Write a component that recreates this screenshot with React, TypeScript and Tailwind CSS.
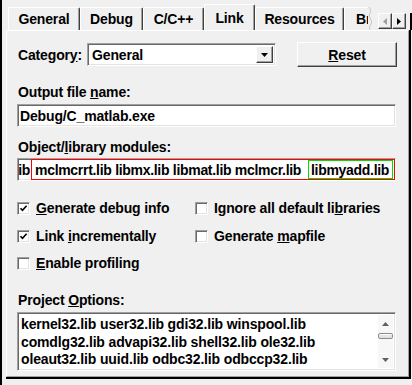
import React from 'react';

const raised =
  'border border-t-white border-l-white border-r-[#404040] border-b-[#404040] shadow-[inset_-1px_-1px_0_#a0a0a0]';
const sunken =
  'border border-t-[#a0a0a0] border-l-[#a0a0a0] border-r-white border-b-white shadow-[inset_1px_1px_0_#696969,inset_-1px_-1px_0_#e3e3e3] bg-white';

const Tab = ({ label, className }: { label: string; className: string }) => (
  <div
    className={`h-[23px] shrink-0 border-t border-l border-t-white border-l-white border-r border-r-[#404040] shadow-[inset_-1px_0_0_#a0a0a0] rounded-t-[2px] flex justify-center pt-[3px] leading-[16px] ${className}`}
  >
    {label}
  </div>
);

const CheckMark = () => (
  <svg width="9" height="9" viewBox="0 0 9 9">
    <path d="M1.5 4.2 L3.5 6.4 L7.6 1.8" fill="none" stroke="#000" strokeWidth="1.6" />
  </svg>
);

const Check = ({ checked, children }: { checked?: boolean; children: React.ReactNode }) => (
  <div className="flex items-center h-[16px] leading-[16px]">
    <span className={`w-[13px] h-[13px] shrink-0 flex items-center justify-center ${sunken}`}>
      {checked && <CheckMark />}
    </span>
    <span className="ml-[6px] whitespace-nowrap">{children}</span>
  </div>
);

export default function App() {
  return (
    <div className="w-[412px] h-[385px] bg-[#f0f0f0] flex overflow-hidden text-black text-[14px] font-bold tracking-[-0.15px] font-['Liberation_Sans',Arial,sans-serif]">
      <div className="w-[2px] h-full bg-black shrink-0" />
      <div className="flex-1 pl-[4px] pr-[1px] relative">
        {/* tab strip */}
        <div className="h-[30px] flex items-end pl-[2px] overflow-hidden w-[371px]">
          <Tab label="General" className="w-[72px]" />
          <Tab label="Debug" className="w-[63px]" />
          <Tab label="C/C++" className="w-[61px]" />
          <div className="w-[51px] h-[27px] shrink-0 -mb-px relative z-10 bg-[#f0f0f0] border-t border-l border-t-white border-l-white border-r border-r-[#404040] shadow-[inset_-1px_0_0_#a0a0a0] rounded-t-[2px] flex justify-center pt-[5px] leading-[16px]">
            Link
          </div>
          <Tab label="Resources" className="w-[89px]" />
          <div className="w-[24px] h-[23px] shrink-0 border-t border-l border-t-white border-l-white pt-[3px] pl-[11px] overflow-hidden whitespace-nowrap leading-[16px]">
            Browse Info
          </div>
          <svg className="shrink-0" width="5" height="23" viewBox="0 0 5 23">
            <path d="M1 0 Q4 3 2 6 Q0 9 2.5 12 Q5 15 2.5 18 Q0.5 20.5 2 23" fill="none" stroke="#c8c8c8" strokeWidth="1" />
          </svg>
        </div>

        {/* tab scroll arrows */}
        <div className="absolute top-[13px] right-[6px] flex">
          <div className={`w-[14px] h-[16px] bg-[#f0f0f0] flex items-center justify-center ${raised}`}>
            <svg width="4" height="7" viewBox="0 0 4 7">
              <path d="M4 0 L0 3.5 L4 7 Z" fill="#a0a0a0" />
            </svg>
          </div>
          <div className={`w-[14px] h-[16px] bg-[#f0f0f0] flex items-center justify-center ${raised}`}>
            <svg width="4" height="7" viewBox="0 0 4 7">
              <path d="M0 0 L4 3.5 L0 7 Z" fill="#000" />
            </svg>
          </div>
        </div>
        <div className="absolute top-[13px] right-0 w-[2px] h-[17px] bg-black" />

        {/* property page */}
        <div className="h-[349px] border-r-2 border-b-2 border-black">
          <div className="h-full border border-t-white border-l-white border-r-[#a0a0a0] border-b-[#a0a0a0] pl-[10px] pt-[11px]">
            <div className="flex items-center h-[25px]">
              <div className="w-[70px] pl-[1px] leading-[16px]">
                Categor<u>y</u>:
              </div>
              <div className={`w-[189px] h-[23px] flex items-center pl-[4px] pr-[2px] ${sunken}`}>
                <span className="flex-1 leading-[16px]">General</span>
                <div className={`w-[17px] h-[17px] bg-[#f0f0f0] flex items-center justify-center ${raised}`}>
                  <svg width="7" height="4" viewBox="0 0 7 4">
                    <path d="M0 0 L7 0 L3.5 4 Z" fill="#000" />
                  </svg>
                </div>
              </div>
              <div className={`ml-[21px] w-[100px] h-[25px] bg-[#f0f0f0] flex items-center justify-center leading-[16px] ${raised}`}>
                <span>
                  <u>R</u>eset
                </span>
              </div>
            </div>

            <div className="mt-[17px] pl-[1px] leading-[16px]">
              Output file <u>n</u>ame:
            </div>
            <div className={`mt-[4px] w-[379px] h-[23px] flex items-center pl-[2px] leading-[16px] ${sunken}`}>
              Debug/C_matlab.exe
            </div>

            <div className="mt-[12px] pl-[1px] leading-[16px]">
              Object/<u>l</u>ibrary modules:
            </div>
            <div className={`mt-[3px] w-[379px] h-[23px] flex items-center leading-[16px] whitespace-nowrap overflow-hidden tracking-[-0.3px] ${sunken}`}>
              <span className="w-[13px] shrink-0 flex justify-end pr-[1px] overflow-hidden">ib</span>
              <span className="w-[364px] shrink-0 flex items-center h-[21px] border border-[#ff0000] pl-[3px] pr-[1px]">
                <span className="flex-1 overflow-hidden">mclmcrrt.lib libmx.lib libmat.lib mclmcr.lib</span>
                <span className="w-[85px] shrink-0 flex items-center h-[19px] border border-[#00dd00] pl-[2px]">
                  libmyadd.lib
                </span>
              </span>
            </div>

            <div className="mt-[19px] grid grid-cols-[178px_1fr]">
              <Check checked>
                <u>G</u>enerate debug info
              </Check>
              <Check>
                Ignore all default li<u>b</u>raries
              </Check>
            </div>
            <div className="mt-[12px] grid grid-cols-[178px_1fr]">
              <Check checked>
                Link <u>i</u>ncrementally
              </Check>
              <Check>
                Generate <u>m</u>apfile
              </Check>
            </div>
            <div className="mt-[11px]">
              <Check>
                <u>E</u>nable profiling
              </Check>
            </div>

            <div className="mt-[21px] pl-[1px] leading-[16px]">
              Project <u>O</u>ptions:
            </div>
            <div className={`mt-[4px] w-[379px] h-[59px] flex p-[2px] ${sunken}`}>
              <div className="flex-1 pl-[1px] pt-[1px] leading-[17.5px] whitespace-nowrap overflow-hidden">
                <div>kernel32.lib user32.lib gdi32.lib winspool.lib</div>
                <div>comdlg32.lib advapi32.lib shell32.lib ole32.lib</div>
                <div>oleaut32.lib uuid.lib odbc32.lib odbccp32.lib</div>
              </div>
              <div className="w-[16px] h-full bg-[#f7f7f7] border-l border-l-[#fdfdfd] flex flex-col items-center">
                <svg className="mt-[7px]" width="7" height="4" viewBox="0 0 7 4">
                  <path d="M0 4 L3.5 0 L7 4 Z" fill="#606060" />
                </svg>
                <div className="mt-[7px] w-[15px] h-[6px] rounded-[2px] border border-[#8c8c8c] bg-[#e4e4e4] shadow-[inset_0_1px_0_#ffffff]" />
                <svg className="mt-auto mb-[6px]" width="7" height="4" viewBox="0 0 7 4">
                  <path d="M0 0 L7 0 L3.5 4 Z" fill="#606060" />
                </svg>
              </div>
            </div>
          </div>
        </div>
      </div>
    </div>
  );
}
